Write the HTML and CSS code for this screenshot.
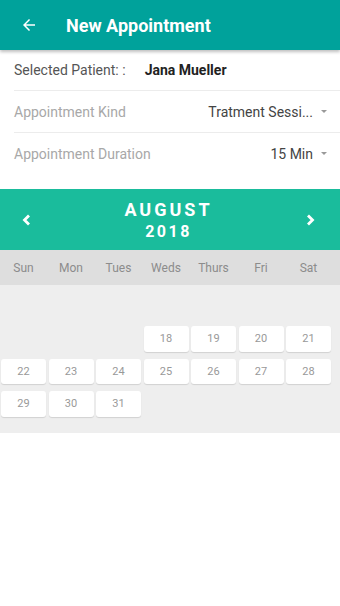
FILE: index.html
```html
<!DOCTYPE html>
<html lang="en">
<head>
  <meta charset="UTF-8">
  <title>New Appointment</title>
  <link rel="stylesheet" href="styles.css">
</head>
<body>
  <header class="app-bar">
    <svg class="back" width="18" height="18" viewBox="0 0 24 24"><path d="M20 11H7.8l5.6-5.6L12 4l-8 8 8 8 1.4-1.4L7.8 13H20z" fill="#fff"/></svg>
    <h1>New Appointment</h1>
  </header>

  <div class="form">
    <div class="row patient">
      <span class="label">Selected Patient: :</span>
      <span class="name">Jana Mueller</span>
    </div>
    <div class="row">
      <span class="label light">Appointment Kind</span>
      <span class="select">Tratment Sessi... <i class="caret"></i></span>
    </div>
    <div class="row">
      <span class="label light">Appointment Duration</span>
      <span class="select">15 Min <i class="caret"></i></span>
    </div>
  </div>

  <div class="calendar">
    <div class="cal-head">
      <svg class="chev" width="12" height="14" viewBox="0 0 12 14"><path d="M8 2.5L3.5 7 8 11.5" stroke="#fff" stroke-width="2.8" fill="none"/></svg>
      <div class="month">
        <div class="m">AUGUST</div>
        <div class="y">2018</div>
      </div>
      <svg class="chev" width="12" height="14" viewBox="0 0 12 14"><path d="M4 2.5L8.5 7 4 11.5" stroke="#fff" stroke-width="2.8" fill="none"/></svg>
    </div>
    <div class="weekdays">
      <span>Sun</span><span>Mon</span><span>Tues</span><span>Weds</span><span>Thurs</span><span>Fri</span><span>Sat</span>
    </div>
    <div class="days">
      <div class="blank"></div><div class="blank"></div><div class="blank"></div>
      <div class="day">18</div><div class="day">19</div><div class="day">20</div><div class="day">21</div>
      <div class="day">22</div><div class="day">23</div><div class="day">24</div><div class="day">25</div>
      <div class="day">26</div><div class="day">27</div><div class="day">28</div>
      <div class="day">29</div><div class="day">30</div><div class="day">31</div>
    </div>
  </div>
</body>
</html>
```

FILE: styles.css
```css
body {
  margin: 0;
  font-family: Roboto, "Liberation Sans", sans-serif;
  background: #fff;
  color: #333;
}

/* Top bar */
.app-bar {
  height: 50px;
  background: #00a29b;
  display: flex;
  align-items: center;
  padding-left: 20px;
  box-shadow: 0 2px 3px rgba(0,0,0,0.25);
  position: relative;
}

.app-bar h1 {
  margin: 0 0 0 28px;
  color: #fff;
  font-size: 18px;
  font-weight: 700;
}

/* Form rows */
.form {
  padding: 0 0 15px 14px;
}

.row {
  display: flex;
  justify-content: space-between;
  align-items: center;
  height: 41px;
  padding-right: 12px;
  border-bottom: 1px solid #ececec;
  font-size: 14px;
}

.row:last-child {
  border-bottom: none;
}

.row.patient {
  justify-content: flex-start;
  height: 40px;
}

.label {
  color: #555;
}

.label.light {
  color: #a8a8a8;
}

.name {
  margin-left: 19px;
  font-weight: 700;
  color: #222;
}

.select {
  color: #444;
  display: flex;
  align-items: center;
  margin-right: 1px;
}

.caret {
  display: inline-block;
  margin-left: 8px;
  border-left: 3.5px solid transparent;
  border-right: 3.5px solid transparent;
  border-top: 3.5px solid #999;
}

/* Calendar */
.cal-head {
  height: 61px;
  background: #1abc9c;
  display: flex;
  justify-content: space-between;
  align-items: center;
  padding: 0 24px 0 21px;
  color: #fff;
}

.month {
  text-align: center;
  font-weight: 700;
  line-height: 22px;
  padding-top: 2px;
}

.month .m {
  font-size: 18px;
  letter-spacing: 3px;
}

.month .y {
  font-size: 16px;
  letter-spacing: 2.5px;
}

.weekdays {
  height: 35px;
  background: #dedede;
  display: grid;
  grid-template-columns: repeat(7, 45px);
  column-gap: 2.5px;
  padding-left: 1px;
  align-items: center;
  font-size: 12px;
  color: #8c8c8c;
  text-align: center;
}

.days {
  background: #eeeeee;
  display: grid;
  grid-template-columns: repeat(7, 45px);
  grid-auto-rows: 25.5px;
  gap: 7px 2.5px;
  padding: 41px 0 16px 1px;
}

.day {
  background: #fff;
  border-radius: 3px;
  box-shadow: 0 1px 1px rgba(0,0,0,0.12);
  font-size: 11px;
  color: #999;
  display: flex;
  align-items: center;
  justify-content: center;
}
```
